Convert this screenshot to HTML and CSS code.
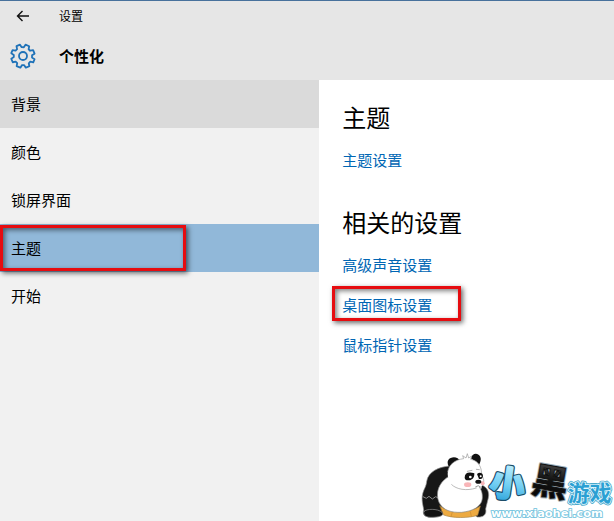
FILE: index.html
```html
<!DOCTYPE html>
<html lang="zh-CN">
<head>
  <meta charset="UTF-8" />
  <meta name="viewport" content="width=device-width, initial-scale=1.0" />
  <title>设置</title>
  <link rel="stylesheet" href="styles.css">
</head>

<body>

<header class="topbar">
  <div class="title-row">
    <button class="back" type="button" aria-label="返回">
      <svg width="14" height="12" viewBox="0 0 14 12" fill="none" stroke="#111" stroke-width="1.4">
        <path d="M13 6H1.5M6.5 1L1.5 6l5 5" />
      </svg>
    </button>
    <span class="app-name">设置</span>
  </div>
  <div class="page-row">
    <svg class="gear" width="26" height="26" viewBox="0 0 26 26" fill="none" stroke="#1f72b8" stroke-width="1.8" stroke-linejoin="round">
      <path transform="rotate(22.5 13 13)" d="M10.4 4.600L11 1.600h4l.6 3 2 .8 2.500-1.700 2.700 2.700-1.700 2.500.8 2 3 .6v3.400l-3 .6-.8 2 1.700 2.500-2.700 2.700-2.500-1.700-2 .8-.6 3h-4l-.6-3-2-.8-2.500 1.700-2.700-2.700 1.700-2.500-.8-2-3-.6v-3.400l3-.6.8-2-1.700-2.500 2.700-2.700 2.500 1.700z" />
      <circle cx="13" cy="13" r="4" />
    </svg>
    <h1>个性化</h1>
  </div>
</header>

<div class="content">
  <nav class="sidebar">
    <a class="hover" href="#">背景</a>
    <a href="#">颜色</a>
    <a href="#">锁屏界面</a>
    <a class="active" href="#">主题</a>
    <a href="#">开始</a>
  </nav>

  <main class="panel">
    <section>
      <h2>主题</h2>
      <a href="#">主题设置</a>
    </section>
    <section>
      <h2>相关的设置</h2>
      <a href="#">高级声音设置</a>
      <a class="marked" href="#">桌面图标设置</a>
      <a href="#">鼠标指针设置</a>
    </section>
  </main>
</div>

<!-- site logo -->
<svg class="logo" width="195" height="68" viewBox="12 9 585 204" role="img" aria-label="小黑游戏">
  <defs>
    <linearGradient id="blue" x1="0" y1="0" x2="0" y2="1">
      <stop offset="0.2" stop-color="#b5ebfc" />
      <stop offset="0.6" stop-color="#6fcdf2" />
      <stop offset="1" stop-color="#229bd6" />
    </linearGradient>
    <linearGradient id="dark" x1="0" y1="0" x2="0" y2="1">
      <stop offset="0.1" stop-color="#555" />
      <stop offset="0.5" stop-color="#151515" />
      <stop offset="1" stop-color="#000" />
    </linearGradient>
  </defs>

  <!-- panda -->
  <g stroke-linecap="round" stroke-linejoin="round">
    <path d="M104 48C72 50 39 65 35 94c-1 15-8 22-12 37-5 20 2 37 3 49-5 15 7 22 25 22 19 0 34-4 36-15l18-50z" fill="#171717" stroke="#999" stroke-width="2" />
    <path d="M202 106c15 7 22 20 18 38l-8 33c4 17-8 26-26 24l-13-12z" fill="#171717" stroke="#999" stroke-width="2" />
    <path d="M24 140l10 5 8-6 10 8 10-7 10 5" fill="none" stroke="#888" stroke-width="3" />
    <path d="M75 168c28 22 89 22 121 0l-8 28c-27 9-77 9-102-1z" fill="#edaa41" stroke="#a8803f" stroke-width="2" />
    <path d="M112 186l-4 14m58-15l3 14" fill="none" stroke="#c98a30" stroke-width="2" />
    <path d="M97 82c-25 17-37 46-25 75 12 25 38 31 67 30 32-3 61-16 63-42 1-20-5-31-17-42z" fill="#fff" stroke="#888" stroke-width="2" />
    <path d="M106 57c-10-13-12-27 1-33 12-5 24 0 28 9z" fill="#111" />
    <path d="M168 25c2-15 20-19 27-6 5 9 1 19-4 27z" fill="#111" />
    <path d="M98 72c0-27 20-43 48-46l-3-9 10 7 4-13 4 13 9-6-3 10c18 4 27 14 31 29l3 20c10 17 7 26-7 34-26 12-59 5-80-6-11-8-16-19-16-33z" fill="#fff" />
    <path d="M98 65c4-22 22-36 48-39l-3-9 10 7 4-13 4 13 9-6-3 10c18 4 27 14 31 29l3 20c6 10 7 18 3 24M110 104c14 14 44 20 74 10" fill="none" stroke="#999" stroke-width="2" />
    <path d="M149 83c0-13 10-19 29-13 1 16-10 22-19 21-6 0-10-3-10-8z" fill="#111" />
    <path d="M186 72c8-6 16-4 18 5 0 9-7 11-12 10z" fill="#111" />
    <circle cx="166" cy="81" r="4" fill="#fff" />
    <circle cx="197" cy="79" r="3" fill="#fff" />
    <path d="M157 64l14-3m13-3l9 1" stroke="#888" stroke-width="2" />
    <ellipse cx="158" cy="104" rx="11" ry="7" fill="#f8b5b8" />
    <ellipse cx="203" cy="100" rx="6" ry="6" fill="#f8b5b8" />
    <ellipse cx="190" cy="95" rx="9" ry="6" fill="#111" />
    <path d="M182 110q8-7 15 1" fill="none" stroke="#666" stroke-width="2" />
    <path d="M27 184c6-8 42-9 54 3 8 9-6 14-27 15-19 1-32-5-27-18z" fill="#111" stroke="#999" stroke-width="2" />
  </g>

  <!-- name and address -->
  <g class="logo-name">
    <text class="edge" x="226" y="138" font-size="104" transform="rotate(8 278 100)">小</text>
    <text class="sky" x="226" y="138" font-size="104" transform="rotate(8 278 100)">小</text>
    <text class="shadow" x="352" y="135" font-size="108" transform="rotate(10 404 95)">黑</text>
    <text class="ink" x="352" y="135" font-size="108" transform="rotate(10 404 95)">黑</text>
    <text class="rim" x="459" y="153" font-size="65">游戏</text>
    <text class="water" x="459" y="153" font-size="65">游戏</text>
  </g>
  <text class="logo-url" x="228" y="200" font-size="34">www.xiaohei.com</text>
</svg>

</body>
</html>
```

FILE: styles.css
```css
* {
  margin: 0;
  padding: 0;
  box-sizing: border-box;
}

body {
  display: flex;
  flex-direction: column;
  min-height: 100vh;
  font-family: "Noto Sans CJK SC", sans-serif;
  font-size: 15px;
  line-height: 24px;
  color: #000;
  background: #fff;
}

a {
  text-decoration: none;
}

/* header */
.topbar {
  height: 80px;
  background: #e6e6e6;
  border-top: 1px solid #47719c;
}

.title-row,
.page-row {
  display: flex;
  align-items: center;
}

.title-row {
  height: 30px;
  padding-left: 16px;
  gap: 29px;
}

.page-row {
  height: 50px;
  padding-left: 10px;
  gap: 23px;
}

.back {
  display: flex;
  border: none;
  background: none;
}

.app-name {
  font-size: 12px;
}

.topbar h1 {
  font-size: 15px;
  font-weight: bold;
}

/* two columns */
.content {
  display: flex;
  flex: 1;
}

.sidebar {
  width: 52%;
  background: #f1f1f1;
}

.sidebar a {
  display: block;
  padding: 12px 11px;
  color: #000;
}

.sidebar .hover {
  background: #dadada;
}

.sidebar .active {
  position: relative;
  background: #91b8d9;
}

.panel {
  flex: 1;
  padding: 19px 23px;
}

.panel section {
  margin-bottom: 24px;
}

.panel h2 {
  font-size: 24px;
  font-weight: normal;
  line-height: 36px;
  margin-bottom: 5px;
}

.panel a {
  display: block;
  position: relative;
  width: fit-content;
  padding: 8px 0;
  color: #0066b4;
}

/* red marker frames */
.active::after,
.marked::after {
  content: "";
  position: absolute;
  box-sizing: border-box;
  border: 3px solid #e60c10;
  box-shadow: 2px 2px 5px rgba(0, 0, 0, 0.6), inset 2px 2px 5px rgba(0, 0, 0, 0.5);
}

.active::after {
  top: 1px;
  bottom: 1px;
  left: 0;
  width: 186px;
}

.marked::after {
  top: 1px;
  bottom: 4px;
  left: -10px;
  right: -29px;
}

/* logo */
.logo {
  position: absolute;
  right: 0;
  bottom: 0;
  overflow: visible;
}

.logo-name {
  font-family: "Noto Sans CJK SC", sans-serif;
  font-weight: bold;
  stroke-linejoin: round;
}

.shadow {
  fill: #9faeb5;
  stroke: #9faeb5;
  stroke-width: 9px;
}

.edge {
  fill: #1c4d68;
  stroke: #1c4d68;
  stroke-width: 15px;
}

.sky {
  fill: url(#blue);
  stroke: url(#blue);
  stroke-width: 8px;
}

.ink {
  fill: url(#dark);
  stroke: #111;
  stroke-width: 3px;
}

.rim {
  fill: #4aa9cb;
  stroke: #4aa9cb;
  stroke-width: 10px;
}

.water {
  fill: #2ba0d3;
  stroke: #e4f8fe;
  stroke-width: 5px;
  paint-order: stroke;
}

.logo-url {
  font-family: "DejaVu Sans", sans-serif;
  font-weight: bold;
  fill: #fff;
  stroke: #6bbfdc;
  stroke-width: 5px;
  paint-order: stroke;
}
```
